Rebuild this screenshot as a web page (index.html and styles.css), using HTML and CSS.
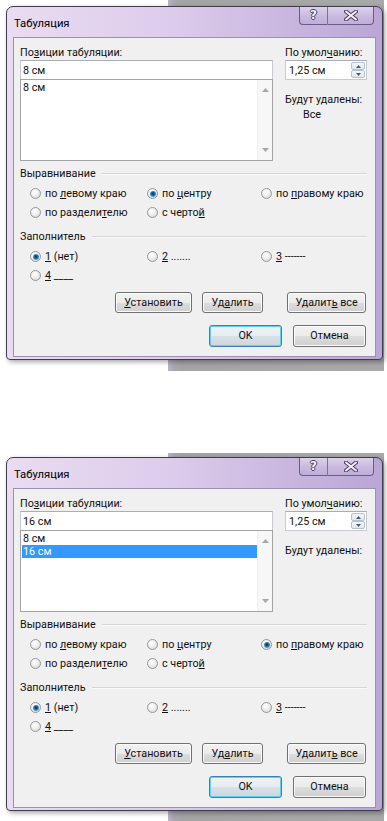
FILE: index.html
```html
<!DOCTYPE html>
<html lang="ru">
<head>
<meta charset="utf-8">
<title>Табуляция</title>
<link rel="stylesheet" href="styles.css">
</head>
<body>
<div class="scene scene-first">
  <div class="backdrop"></div>
  <div class="dialog">
    <div class="titlebar">
      <span class="title">Табуляция</span>
      <div class="caption-buttons">
        <div class="cap-btn cap-help"><span class="qmark">?</span></div>
        <div class="cap-btn cap-close"><svg width="14" height="11" viewBox="0 0 14 11"><path d="M2 1.5 L12 9.5 M12 1.5 L2 9.5" stroke="#4b4060" stroke-width="4" stroke-linecap="round"/><path d="M2 1.5 L12 9.5 M12 1.5 L2 9.5" stroke="#f4f0f8" stroke-width="2" stroke-linecap="round"/></svg></div>
      </div>
    </div>
    <div class="client">
      <div class="top">
        <div class="col-left">
          <div class="label">По<u>з</u>иции табуляции:</div>
          <div class="textbox">8 см</div>
          <div class="listbox">
            <div class="list-items">
              <div class="item">8 см</div>
            </div>
            <div class="vscroll">
              <svg width="7" height="4" viewBox="0 0 7 4"><path d="M0 4 L3.5 0 L7 4 Z" fill="#a8a8a8"/></svg>
              <svg width="7" height="4" viewBox="0 0 7 4"><path d="M0 0 L3.5 4 L7 0 Z" fill="#a8a8a8"/></svg>
            </div>
          </div>
        </div>
        <div class="col-right">
          <div class="label">По умол<u>ч</u>анию:</div>
          <div class="spinbox">
            <span class="spin-value">1,25 см</span>
            <div class="spin">
              <div class="spin-btn"><svg width="5" height="3" viewBox="0 0 5 3"><path d="M0 3 L2.5 0 L5 3 Z" fill="#4a5a6e"/></svg></div>
              <div class="spin-btn"><svg width="5" height="3" viewBox="0 0 5 3"><path d="M0 0 L2.5 3 L5 0 Z" fill="#4a5a6e"/></svg></div>
            </div>
          </div>
          <div class="label del-label">Будут удалены:</div>
          <div class="del-value">Все</div>
        </div>
      </div>
      <div class="group-head"><span>Выравнивание</span><div class="rule"></div></div>
      <div class="radio-grid">
        <div class="radio"><span class="dot"></span><span>по <u>л</u>евому краю</span></div>
        <div class="radio"><span class="dot on"></span><span>по <u>ц</u>ентру</span></div>
        <div class="radio"><span class="dot"></span><span>по <u>п</u>равому краю</span></div>
        <div class="radio"><span class="dot"></span><span>по раздели<u>т</u>елю</span></div>
        <div class="radio"><span class="dot"></span><span>с черто<u>й</u></span></div>
      </div>
      <div class="group-head group-fill"><span>Заполнитель</span><div class="rule"></div></div>
      <div class="radio-grid">
        <div class="radio"><span class="dot on"></span><span><u>1</u> (нет)</span></div>
        <div class="radio"><span class="dot"></span><span><u>2</u> .......</span></div>
        <div class="radio"><span class="dot"></span><span><u>3</u> -------</span></div>
        <div class="radio"><span class="dot"></span><span><u>4</u> ____</span></div>
      </div>
      <div class="btn-row btn-row-1">
        <div class="btn btn-set"><u>У</u>становить</div>
        <div class="btn btn-del">Уд<u>а</u>лить</div>
        <div class="btn btn-delall">Удалит<u>ь</u> все</div>
      </div>
      <div class="btn-row btn-row-2">
        <div class="btn btn-ok default">OK</div>
        <div class="btn btn-cancel">Отмена</div>
      </div>
    </div>
  </div>
</div>

<div class="scene scene-second">
  <div class="backdrop"></div>
  <div class="dialog">
    <div class="titlebar">
      <span class="title">Табуляция</span>
      <div class="caption-buttons">
        <div class="cap-btn cap-help"><span class="qmark">?</span></div>
        <div class="cap-btn cap-close"><svg width="14" height="11" viewBox="0 0 14 11"><path d="M2 1.5 L12 9.5 M12 1.5 L2 9.5" stroke="#4b4060" stroke-width="4" stroke-linecap="round"/><path d="M2 1.5 L12 9.5 M12 1.5 L2 9.5" stroke="#f4f0f8" stroke-width="2" stroke-linecap="round"/></svg></div>
      </div>
    </div>
    <div class="client">
      <div class="top">
        <div class="col-left">
          <div class="label">По<u>з</u>иции табуляции:</div>
          <div class="textbox">16 см</div>
          <div class="listbox">
            <div class="list-items">
              <div class="item">8 см</div>
              <div class="item selected">16 см</div>
            </div>
            <div class="vscroll">
              <svg width="7" height="4" viewBox="0 0 7 4"><path d="M0 4 L3.5 0 L7 4 Z" fill="#a8a8a8"/></svg>
              <svg width="7" height="4" viewBox="0 0 7 4"><path d="M0 0 L3.5 4 L7 0 Z" fill="#a8a8a8"/></svg>
            </div>
          </div>
        </div>
        <div class="col-right">
          <div class="label">По умол<u>ч</u>анию:</div>
          <div class="spinbox">
            <span class="spin-value">1,25 см</span>
            <div class="spin">
              <div class="spin-btn"><svg width="5" height="3" viewBox="0 0 5 3"><path d="M0 3 L2.5 0 L5 3 Z" fill="#4a5a6e"/></svg></div>
              <div class="spin-btn"><svg width="5" height="3" viewBox="0 0 5 3"><path d="M0 0 L2.5 3 L5 0 Z" fill="#4a5a6e"/></svg></div>
            </div>
          </div>
          <div class="label del-label">Будут удалены:</div>
          <div class="del-value"></div>
        </div>
      </div>
      <div class="group-head"><span>Выравнивание</span><div class="rule"></div></div>
      <div class="radio-grid">
        <div class="radio"><span class="dot"></span><span>по <u>л</u>евому краю</span></div>
        <div class="radio"><span class="dot"></span><span>по <u>ц</u>ентру</span></div>
        <div class="radio"><span class="dot on"></span><span>по <u>п</u>равому краю</span></div>
        <div class="radio"><span class="dot"></span><span>по раздели<u>т</u>елю</span></div>
        <div class="radio"><span class="dot"></span><span>с черто<u>й</u></span></div>
      </div>
      <div class="group-head group-fill"><span>Заполнитель</span><div class="rule"></div></div>
      <div class="radio-grid">
        <div class="radio"><span class="dot on"></span><span><u>1</u> (нет)</span></div>
        <div class="radio"><span class="dot"></span><span><u>2</u> .......</span></div>
        <div class="radio"><span class="dot"></span><span><u>3</u> -------</span></div>
        <div class="radio"><span class="dot"></span><span><u>4</u> ____</span></div>
      </div>
      <div class="btn-row btn-row-1">
        <div class="btn btn-set"><u>У</u>становить</div>
        <div class="btn btn-del">Уд<u>а</u>лить</div>
        <div class="btn btn-delall">Удалит<u>ь</u> все</div>
      </div>
      <div class="btn-row btn-row-2">
        <div class="btn btn-ok default">OK</div>
        <div class="btn btn-cancel">Отмена</div>
      </div>
    </div>
  </div>
</div>
</body>
</html>
```

FILE: styles.css
```css
* { box-sizing: border-box; }

html, body {
  margin: 0;
  padding: 0;
  background: #ffffff;
}

body {
  width: 387px;
  height: 821px;
  overflow: hidden;
  font-family: Roboto, "Noto Sans", sans-serif;
  font-size: 10.75px;
  line-height: 15px;
  color: #111;
}

u { text-decoration: underline; text-underline-offset: 1px; }

.scene {
  position: relative;
  height: 451px;
  padding: 6px 0 0 6px;
}

.scene-second {
  height: 370px;
}

.backdrop {
  position: absolute;
  left: 168px;
  top: 0;
  width: 216px;
  height: 371px;
  background: linear-gradient(to right, #bdb2c8 0, #a9a6ad 6px, #a4a4a4 14px, #a9a9a9 100%);
}

.scene-second .backdrop {
  top: 2px;
}

.dialog {
  position: relative;
  width: 377px;
  height: 354px;
  border: 1px solid #3f3c4c;
  border-radius: 7px 7px 4px 4px;
  background: linear-gradient(to right, #eadcf1 0%, #dccbeb 45%, #c6b3dd 80%, #b9a6d6 100%);
  box-shadow: 2px 2px 5px rgba(0, 0, 0, 0.35);
  display: flex;
  flex-direction: column;
}

.titlebar {
  height: 30px;
  display: flex;
  align-items: flex-start;
  justify-content: space-between;
  padding: 0 8px 0 7px;
}

.title {
  margin-top: 9px;
  font-size: 11.25px;
  color: #000;
}

.caption-buttons {
  display: flex;
  height: 18px;
}

.cap-btn {
  height: 18px;
  border: 1px solid #6a5c86;
  border-top: none;
  background: linear-gradient(#dcd1ec, #c8badf 55%, #bfaed9);
  display: flex;
  align-items: center;
  justify-content: center;
}

.cap-help {
  width: 28px;
  border-radius: 0 0 0 4px;
  border-right: none;
}

.cap-close {
  width: 47px;
  border-radius: 0 0 4px 0;
  border-left: 1px solid #7d6f98;
}

.qmark {
  font-family: "DejaVu Sans", sans-serif;
  font-size: 12px;
  font-weight: bold;
  color: #f6f2fa;
  line-height: 13px;
  text-shadow: -1px 0 #4b4060, 1px 0 #4b4060, 0 -1px #4b4060, 0 1px #4b4060;
}

.client {
  height: 320px;
  margin: 0 6px;
  border: 1px solid #9c90b2;
  background: #f0f0f0;
}

.top {
  display: flex;
  padding: 7px 8px 0 6px;
  gap: 12px;
}

.col-left {
  width: 253px;
  display: flex;
  flex-direction: column;
}

.col-right {
  width: 82px;
  display: flex;
  flex-direction: column;
}

.label {
  height: 15px;
  white-space: nowrap;
}

.textbox {
  height: 20px;
  border: 1px solid #c7cbd1;
  border-top-color: #abadb3;
  background: #fff;
  padding: 2px 0 0 2px;
  line-height: 15px;
}

.listbox {
  margin-top: -1px;
  height: 82px;
  border: 1px solid #a3a3a3;
  background: #fff;
  display: flex;
}

.list-items {
  flex: 1;
  padding: 1px 0 0 1px;
}

.item {
  height: 13px;
  line-height: 13px;
  padding-left: 1px;
}

.item.selected {
  background: #3399ff;
  color: #fff;
}

.vscroll {
  width: 15px;
  background: #f7f7f7;
  border-left: 1px solid #f0f0f0;
  display: flex;
  flex-direction: column;
  justify-content: space-between;
  align-items: center;
  padding: 8px 0 8px 0;
}

.spinbox {
  height: 20px;
  border: 1px solid #c7cbd1;
  border-top-color: #abadb3;
  background: #fff;
  display: flex;
  justify-content: space-between;
}

.spin-value {
  padding: 2px 0 0 3px;
}

.spin {
  width: 15px;
  display: flex;
  flex-direction: column;
  padding: 1px 1px 1px 0;
}

.spin-btn {
  flex: 1;
  border: 1px solid #b5c2d3;
  border-radius: 2px;
  background: linear-gradient(#f4f7fb, #dfe7f1);
  display: flex;
  align-items: center;
  justify-content: center;
}

.del-label {
  margin-top: 12px;
}

.del-value {
  height: 15px;
  padding-left: 18px;
}

.group-head {
  display: flex;
  align-items: center;
  height: 15px;
  margin-top: 5px;
  padding: 0 8px 0 6px;
}

.group-fill {
  margin-top: 7px;
}

.group-head .rule {
  flex: 1;
  height: 1px;
  margin: 0 0 1px 6px;
  background: #d5d5d5;
  box-shadow: 0 1px 0 #fafafa;
}

.radio-grid {
  margin-top: 3px;
  padding-left: 16px;
  display: grid;
  grid-template-columns: 117px 114px 1fr;
  grid-auto-rows: 19px;
}

.radio {
  display: flex;
  align-items: center;
  gap: 4px;
  white-space: nowrap;
}

.dot {
  position: relative;
  width: 11px;
  height: 11px;
  flex: none;
  border-radius: 50%;
  border: 1px solid #979797;
  background: radial-gradient(circle at 40% 35%, #ffffff 0, #f1f1f1 40%, #d0d0d0 100%);
}

.dot.on::after {
  content: "";
  position: absolute;
  left: 1.5px;
  top: 1.5px;
  width: 6px;
  height: 6px;
  border-radius: 50%;
  background: radial-gradient(circle at 50% 45%, #0b2e4f 0, #1a5f95 35%, #4ab4ea 75%, #8fd6f8 100%);
}

.btn-row {
  display: flex;
  justify-content: flex-end;
  padding-right: 9px;
}

.btn-row-1 {
  margin-top: 7px;
  height: 21px;
}

.btn-row-2 {
  margin-top: 12px;
  height: 22px;
}

.btn {
  height: 100%;
  border: 1px solid #707070;
  border-radius: 3px;
  background: linear-gradient(#f2f2f2 0%, #ebebeb 50%, #dddddd 50%, #cfcfcf 100%);
  box-shadow: inset 0 0 0 1px #fbfbfb;
  text-align: center;
  white-space: nowrap;
}

.btn-row-1 .btn { line-height: 19px; }
.btn-row-2 .btn { line-height: 20px; }

.btn-set { width: 77px; }
.btn-del { width: 61px; margin-left: 10px; }
.btn-delall { width: 79px; margin-left: 24px; }
.btn-ok { width: 73px; }
.btn-cancel { width: 73px; margin-left: 11px; }

.btn.default {
  border-color: #3c7fb1;
  box-shadow: inset 0 0 0 1px #5fd1f8;
  background: linear-gradient(#eef3f6 0%, #e6ecf0 50%, #d8e1e7 50%, #ccd6dd 100%);
}
```
